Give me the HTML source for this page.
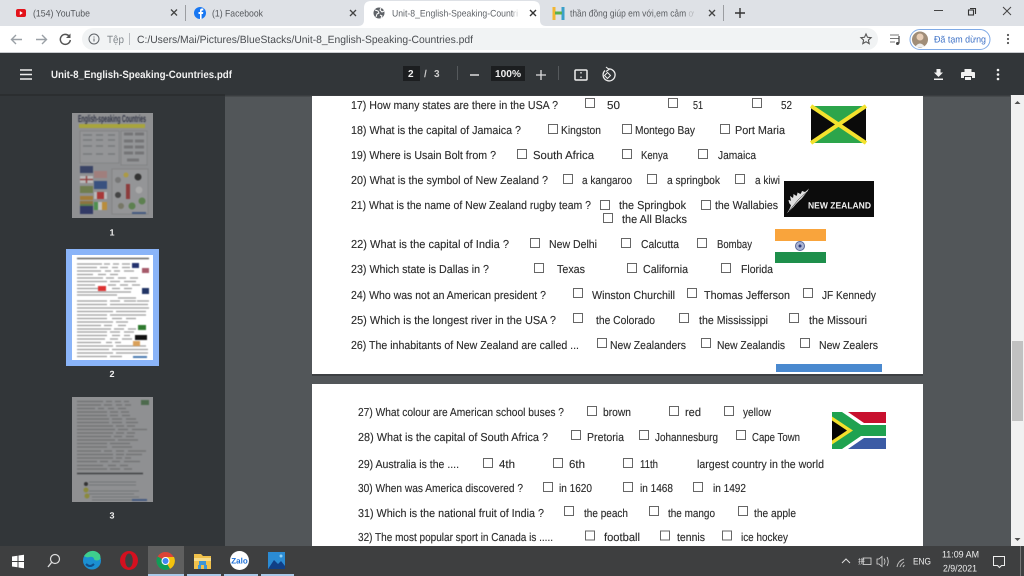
<!DOCTYPE html>
<html><head><meta charset="utf-8"><style>
html,body{margin:0;padding:0;width:1024px;height:576px;overflow:hidden;background:#525659}
svg{display:block;text-rendering:geometricPrecision}
.q text{font-family:"Liberation Sans",sans-serif;font-size:11.5px;fill:#2a2a2a;stroke:#2a2a2a;stroke-width:.12px}
.q{filter:blur(.3px)}
.c rect{fill:#fff;stroke:#666;stroke-width:1}
.u{font-family:"Liberation Sans",sans-serif}
.t{filter:blur(.55px)}
.s{filter:blur(.3px)}
</style></head><body>
<svg width="1024" height="576" viewBox="0 0 1024 576" xmlns="http://www.w3.org/2000/svg">
<!-- base -->
<rect width="1024" height="576" fill="#525659"/>
<!-- tab strip -->
<rect width="1024" height="26" fill="#dee1e6"/>
<path d="M358 26q6 0 6-6V8q0-7 7-7h162q7 0 7 7v12q0 6 6 6z" fill="#fff"/>
<rect y="26" width="1024" height="27" fill="#fff"/>
<rect x="82" y="28" width="796" height="22" rx="11" fill="#f1f3f4"/>
<rect y="52" width="1024" height="1" fill="#c9cbcf"/>
<g class="s">
<!-- tab 1 -->
<rect x="16" y="9" width="10" height="8" rx="2" fill="#e3131b"/><path d="M19.800 11l3 2-3 2z" fill="#fff"/>
<text class="u" x="33" y="16.500" font-size="9.500" fill="#55585c" textLength="57" lengthAdjust="spacingAndGlyphs">(154) YouTube</text>
<path d="M171 9.500l6 6M177 9.500l-6 6" stroke="#444" stroke-width="1.300"/>
<rect x="185" y="5" width="1" height="16" fill="#9b9da1"/>
<circle cx="200" cy="13" r="6" fill="#1877f2"/><path d="M200 19v-5h-1.500v-2h1.500v-1.500q0-2 2-2h1.300v2h-1q-.7 0-.7.7V12h1.700l-.3 2h-1.400v5z" fill="#fff"/>
<text class="u" x="212" y="16.500" font-size="9.500" fill="#55585c" textLength="51" lengthAdjust="spacingAndGlyphs">(1) Facebook</text>
<path d="M350 10l6 6M356 10l-6 6" stroke="#444" stroke-width="1.300"/>
<!-- tab 3 -->
<circle cx="379" cy="13" r="5.500" fill="#5f6368"/><path d="M375 10l3 1 1 2-2 1-1 3M381 8l-1 2 2 2 2-1M380 15l2 1-1 2" stroke="#fff" stroke-width="1" fill="none"/>
<text class="u" x="392" y="16.500" font-size="9.500" fill="#5f6368" textLength="126" lengthAdjust="spacingAndGlyphs">Unit-8_English-Speaking-Countri</text>
<rect x="514" y="5" width="12" height="16" fill="#fff" opacity=".7"/>
<path d="M530 10l6 6M536 10l-6 6" stroke="#333" stroke-width="1.400"/>
<!-- tab 4 -->
<path d="M554 7v13" stroke="#f2b632" stroke-width="3"/><path d="M563 7v13" stroke="#3aa0c9" stroke-width="3"/><path d="M555 13h7" stroke="#5bb04a" stroke-width="3"/>
<text class="u" x="570" y="16.500" font-size="9.500" fill="#5a5d61" textLength="124" lengthAdjust="spacingAndGlyphs">thần đồng giúp em với,em cảm ơ</text>
<rect x="688" y="5" width="8" height="16" fill="#dee1e6" opacity=".7"/>
<path d="M709 10l6 6M715 10l-6 6" stroke="#444" stroke-width="1.300"/>
<rect x="723" y="5" width="1" height="16" fill="#9b9da1"/>
<path d="M740 8v10M735 13h10" stroke="#333" stroke-width="1.400"/>
<!-- window controls -->
<path d="M934 10.500h9" stroke="#444" stroke-width="1"/>
<path d="M970 8.500h5.500v5.500" stroke="#333" stroke-width="1.100" fill="none"/><rect x="968.500" y="10" width="5" height="5" stroke="#333" stroke-width="1.100" fill="none"/>
<path d="M1003 7l8 8M1011 7l-8 8" stroke="#444" stroke-width="1"/>
<!-- nav -->
<path d="M12 39.500h10M16 35l-4.500 4.500L16 44" stroke="#9aa0a6" stroke-width="1.400" fill="none"/>
<path d="M36 39.500h10M42 35l4.500 4.500L42 44" stroke="#9aa0a6" stroke-width="1.400" fill="none"/>
<path d="M69 36a5 5 0 1 0 1.300 4" stroke="#555" stroke-width="1.500" fill="none"/><path d="M70.500 33.500v4.500h-4.500z" fill="#555"/>
<circle cx="94" cy="39" r="5" fill="none" stroke="#5f6368" stroke-width="1"/><path d="M94 38.500v3M94 36.500v1" stroke="#5f6368" stroke-width="1"/>
<text class="u" x="107" y="43" font-size="10.500" fill="#80868b" textLength="17" lengthAdjust="spacingAndGlyphs">Tệp</text>
<rect x="129" y="33" width="1" height="12" fill="#b9bcc0"/>
<text class="u" x="137" y="43" font-size="10.500" fill="#4a4d51" textLength="336" lengthAdjust="spacingAndGlyphs">C:/Users/Mai/Pictures/BlueStacks/Unit-8_English-Speaking-Countries.pdf</text>
<path d="M866 34l1.500 3.300 3.600.4-2.700 2.400.8 3.500-3.200-1.800-3.200 1.800.8-3.500-2.700-2.400 3.600-.4z" fill="none" stroke="#555" stroke-width="1.100"/>
<path d="M890 35h9M890 38.500h9M890 42h5" stroke="#777" stroke-width="1"/><path d="M899 36v7.500" stroke="#444" stroke-width="1.200"/><circle cx="897.500" cy="43.500" r="1.500" fill="#444"/>
<rect x="910" y="29.500" width="80" height="20" rx="10" fill="#fff" stroke="#7faae6" stroke-width="1"/>
<circle cx="920" cy="39.500" r="8" fill="#a08d78"/><circle cx="920" cy="37" r="3.500" fill="#e7cdb6"/><path d="M915 47q5-7 10 0z" fill="#eee"/>
<text class="u" x="934" y="42.500" font-size="9.500" fill="#3d71c6" textLength="52" lengthAdjust="spacingAndGlyphs">Đã tạm dừng</text>
<circle cx="1008" cy="35" r="1.100" fill="#555"/><circle cx="1008" cy="39" r="1.100" fill="#555"/><circle cx="1008" cy="43" r="1.100" fill="#555"/>
</g>
<!-- pdf toolbar -->
<rect y="53" width="1024" height="42" fill="#323639"/>
<rect y="95" width="225" height="451" fill="#323639"/>
<g class="s">
<path d="M20 70h12M20 74.500h12M20 79h12" stroke="#eee" stroke-width="1.500"/>
<text class="u" x="51" y="78" font-size="10.500" font-weight="700" fill="#f1f1f1" textLength="181" lengthAdjust="spacingAndGlyphs">Unit-8_English-Speaking-Countries.pdf</text>
<rect x="403" y="66" width="17" height="15" fill="#1c1e20"/>
<text class="u" x="408" y="77" font-size="10" font-weight="700" fill="#eee">2</text>
<text class="u" x="424" y="77" font-size="10" font-weight="700" fill="#ccc">/</text>
<text class="u" x="434" y="77" font-size="10" font-weight="700" fill="#ccc">3</text>
<rect x="457" y="66" width="1" height="14" fill="#55595c"/>
<path d="M470 75h9" stroke="#ddd" stroke-width="1.500"/>
<rect x="491" y="66" width="34" height="15" fill="#1c1e20"/>
<text class="u" x="495" y="77" font-size="10" font-weight="700" fill="#eee" textLength="26" lengthAdjust="spacingAndGlyphs">100%</text>
<path d="M536 75h10M541 70v10" stroke="#ddd" stroke-width="1.300"/>
<rect x="558" y="66" width="1" height="14" fill="#55595c"/>
<rect x="575" y="70" width="12" height="10" rx="1" fill="none" stroke="#eee" stroke-width="1.500"/><path d="M581 72v1.500M581 76.500v1.500" stroke="#eee" stroke-width="1.300"/>
<path d="M608 69a6 6 0 1 1-3 1.500" fill="none" stroke="#eee" stroke-width="1.300"/><path d="M606 67l3 2.500-3 2" fill="none" stroke="#eee" stroke-width="1.100"/><path d="M607.500 72.500l3 3-3 3-3-3z" fill="none" stroke="#eee" stroke-width="1"/>
<path d="M936.500 69h4v3.500h2.500l-4.500 4.500-4.500-4.500h2.500z" fill="#f1f1f1"/><rect x="934" y="78.500" width="9" height="1.500" fill="#f1f1f1"/>
<path d="M964.500 69h7v3h-7z" fill="#f1f1f1"/><path d="M962 72h12q1 0 1 1v5h-3v-2h-8v2h-3v-5q0-1 1-1z" fill="#f1f1f1"/><rect x="965" y="77" width="6" height="3" fill="#f1f1f1"/>
<circle cx="998" cy="70" r="1.300" fill="#f1f1f1"/><circle cx="998" cy="74.500" r="1.300" fill="#f1f1f1"/><circle cx="998" cy="79" r="1.300" fill="#f1f1f1"/>
</g>
<rect y="94" width="225" height="2" fill="#2b2e30"/>
<rect x="225" y="95" width="785" height="1.500" fill="#3a3d40"/>
<!-- sidebar thumbnails -->
<rect x="72" y="113" width="81" height="105" fill="#8f9092"/>
<g class="t">
<text x="78" y="122" font-size="10" font-weight="700" font-family="Liberation Sans,sans-serif" fill="#2d3142" textLength="68" lengthAdjust="spacingAndGlyphs">English-speaking Countries</text>
<rect x="79" y="124" width="66" height="4" fill="#a8a53c"/>
<rect x="80" y="131" width="39" height="32" fill="#949597" stroke="#767779" stroke-width=".5"/>
<rect x="121" y="131" width="26" height="34" fill="#949597" stroke="#767779" stroke-width=".5"/>
<path d="M83 135h9M96 135h7M108 135h7M83 140h9M96 140h7M108 140h7M83 146h9M96 146h7M108 146h7M83 154h9M96 154h7M108 154h7" stroke="#78797b" stroke-width="1.600"/>
<path d="M124 134h9M135 134h9M124 141h9M135 141h9M124 147h9M135 147h9M124 153h9M135 153h9M127 160h12" stroke="#747577" stroke-width="3"/>
<rect x="80" y="166" width="13" height="7" fill="#3a4466"/><rect x="94" y="171" width="13" height="7" fill="#a07f7d"/><rect x="80" y="176" width="13" height="7" fill="#b9b9b9"/><path d="M86.500 176v7M80 179.500h13" stroke="#8f3b3b" stroke-width="1.300"/><rect x="94" y="181" width="13" height="8" fill="#39517f"/><rect x="80" y="186" width="13" height="7" fill="#6f7d4f"/><rect x="94" y="192" width="13" height="7" fill="#b9b9b9"/><rect x="97" y="192" width="7" height="7" fill="#a83838"/><rect x="80" y="196" width="13" height="4" fill="#a17c3a"/><rect x="80" y="201" width="13" height="3" fill="#8d7440"/><rect x="80" y="204" width="13" height="3" fill="#5d7d4f"/><rect x="94" y="202" width="4" height="8" fill="#4f8f4f"/><rect x="98" y="202" width="4" height="8" fill="#c2c2c2"/><rect x="102" y="202" width="5" height="8" fill="#b98d3c"/><rect x="80" y="206" width="13" height="8" fill="#323a66"/>
<rect x="112" y="169" width="36" height="45" fill="#949597" stroke="#767779" stroke-width=".5"/>
<circle cx="118" cy="180" r="3" fill="#777"/><circle cx="126" cy="175" r="2.500" fill="#ac9a45"/><circle cx="138" cy="177" r="3.500" fill="#333"/><rect x="126" y="184" width="4" height="15" fill="#8c3c3c"/><circle cx="118" cy="195" r="3" fill="#444"/><circle cx="139" cy="190" r="3.500" fill="#aaa"/><circle cx="121" cy="206" r="3" fill="#776"/><circle cx="132" cy="206" r="3.500" fill="#5d8050"/><circle cx="142" cy="201" r="3.500" fill="#5d8050"/><rect x="132" y="212" width="14" height="2" fill="#445a80"/>
</g>
<text x="112" y="235.500" font-size="9" font-family="Liberation Sans,sans-serif" font-weight="700" text-anchor="middle" fill="#eee">1</text>

<rect x="66" y="249" width="93" height="117" fill="#8ab4f8"/>
<rect x="72" y="255" width="81" height="105" fill="#fff"/>
<g class="t">
<path d="M77 258.500h72" stroke="#666" stroke-width="1.600"/>
<path d="M77 264h25M104 264h6M113 264h6M122 264h8M77 267.500h20M100 267.500h8M112 267.500h6M122 267.500h8M77 271h24M105 271h6M114 271h6M124 271h10M77 274.500h16M98 274.500h8M110 274.500h8M77 278h26M106 278h8M118 278h8M130 278h8M77 281.500h30M110 281.500h10M124 281.500h12M77 285h18M108 285h8M120 285h8M132 285h8M77 288.500h22M112 288.500h8M124 288.500h8M77 292h54M77 295h40M118 298h18M77 301h30M110 301h10M124 301h12M137 301h12M77 304.500h30M110 304.500h38M77 308h72M77 311.500h36M116 311.500h30M77 315h30M110 315h36M77 318.500h30M112 318.500h10M126 318.500h10M77 322h36M116 322h12M77 325.500h24M104 325.500h8M118 325.500h8M77 329h34M114 329h10M128 329h8M77 332h30M110 332h10M124 332h10M77 335.500h30M112 335.500h8M124 335.500h6M77 339h28M110 339h8M122 339h10M77 342.500h24M106 342.500h6M115 342.500h6M77 346h36M116 346h30M77 349.500h32M112 349.500h36M77 353h36M116 353h32M77 356.500h30M110 356.500h12" stroke="#9c9c9c" stroke-width="1.300"/>
<rect x="132" y="263" width="7" height="5" fill="#23316e"/><rect x="142" y="268" width="7" height="5" fill="#a65a6a"/><rect x="98" y="286" width="8" height="5" fill="#d33"/><rect x="142" y="288" width="7" height="6" fill="#223566"/>
<rect x="138" y="325" width="8" height="5" fill="#2f7a2f"/><rect x="135" y="335" width="12" height="5" fill="#111"/><rect x="133" y="341" width="7" height="5" fill="#d9a05a"/><rect x="133" y="356" width="14" height="2" fill="#4a7ab0"/>
</g>
<text x="112" y="377" font-size="9" font-family="Liberation Sans,sans-serif" font-weight="700" text-anchor="middle" fill="#eee">2</text>

<rect x="72" y="397" width="81" height="105" fill="#8f9092"/>
<g class="t">
<path d="M77 401.500h26M106 401.500h6M115 401.500h6M124 401.500h5M77 405h24M104 405h8M116 405h6M125 405h6M77 408.500h18M98 408.500h6M108 408.500h6M118 408.500h8M77 412h30M110 412h8M121 412h8M77 415.500h30M110 415.500h8M122 415.500h8M77 419h32M112 419h10M126 419h10M77 422.500h32M112 422.500h10M126 422.500h12M77 426h36M116 426h8M127 426h8M77 429.500h38M118 429.500h10M132 429.500h15M77 433h36M116 433h8M127 433h8M77 436.500h34M114 436.500h8M126 436.500h8M77 440h38M118 440h20M77 443.500h30M110 443.500h20M77 447h30M112 447h20M77 451h24M104 451h8M116 451h8M128 451h18M77 454.500h36M116 454.500h8M126 454.500h16M77 458h36M116 458h6M125 458h6M77 461.500h20M100 461.500h8M112 461.500h8M124 461.500h16M77 465.500h26M108 465.500h8M120 465.500h8M77 469h30M110 469h10M124 469h8" stroke="#6f7072" stroke-width="1.300"/>
<rect x="141" y="400" width="8" height="5" fill="#4d6a4d"/>
<path d="M77 473.500h66" stroke="#3f4042" stroke-width="1.500"/>
<path d="M89 482h47M89 485h47M89 491h50M89 494h45M92 497h47M92 500h40" stroke="#747577" stroke-width="1.100"/>
<circle cx="86" cy="484" r="2" fill="#333"/><circle cx="86" cy="490" r="2.500" fill="#8b8a3c"/><circle cx="87" cy="496" r="2.500" fill="#8b8a3c"/>
<rect x="132" y="499" width="15" height="2" fill="#445a80"/>
</g>
<text x="112" y="518.500" font-size="9" font-family="Liberation Sans,sans-serif" font-weight="700" text-anchor="middle" fill="#eee">3</text>
<!-- pages -->
<rect x="312" y="96" width="611" height="278" fill="#fff"/>
<rect x="312" y="374" width="611" height="2" fill="#3d4043"/>
<rect x="312" y="384" width="611" height="162" fill="#fff"/>
<rect x="776" y="364" width="106" height="8" fill="#4a89cf"/>
<!-- flags -->
<g class="s">
<rect x="811" y="106" width="55" height="37" fill="#2ca54b"/>
<path d="M811 106v37l26-18.500zM866 106v37l-26-18.500z" fill="#0a0a0a"/>
<path d="M811 106l55 37M866 106l-55 37" stroke="#f4e22d" stroke-width="4"/>
<rect x="784" y="181" width="90" height="36" fill="#0c0c0c"/>
<!-- silver fern -->
<path d="M787 213q3-4 4-8-2-1-2.500-5 1.500 0 2.500 1-.5-2.500-1-5l3 2q.5-2 .5-4l3 2q1-2 1-3.500l3 1.500q1-1.500 1.500-3l3 1q2-1.500 4-3.500-2 4-4 6l-2 2.500q-1.500 2-3.500 3.500l-2.500 2.500q-2 2-3.500 4-3 3-7 6.500z" fill="#e0e0e0"/>
<path d="M789 211q5-6 9-11 5-5 9-8" stroke="#0c0c0c" stroke-width=".5" fill="none"/>
<text class="u" x="808" y="208.500" font-size="9" font-weight="700" fill="#f4f4f4" textLength="63" lengthAdjust="spacingAndGlyphs">NEW ZEALAND</text>
<rect x="775" y="229" width="51" height="12" fill="#f9a43c"/>
<rect x="775" y="241" width="51" height="11" fill="#fff"/>
<rect x="775" y="252" width="51" height="11" fill="#1e8f4b"/>
<circle cx="800" cy="246" r="4.500" fill="#aab4d4" stroke="#5a6a9a"/><circle cx="800" cy="246" r="1.500" fill="#2d3a7a"/>
<rect x="832" y="412" width="54" height="37" fill="#fff"/>
<path d="M848 412h38v11h-22z" fill="#c8102e"/>
<path d="M864 438h22v11h-38z" fill="#3b5ba5"/>
<path d="M832 412h10l19 13h25v11h-25l-19 13h-10z" fill="#1fa250"/>
<path d="M832 416.500l21 14-21 14z" fill="#f2e02c"/>
<path d="M832 420.500l15 10-15 10z" fill="#050505"/>
</g>
<!-- questions page 1 -->
<g class="q">
<text x="351" y="109" textLength="207" lengthAdjust="spacingAndGlyphs">17) How many states are there in the USA ?</text>
<text x="607" y="109" textLength="13" lengthAdjust="spacingAndGlyphs">50</text>
<text x="693" y="109" textLength="10" lengthAdjust="spacingAndGlyphs">51</text>
<text x="781" y="109" textLength="11" lengthAdjust="spacingAndGlyphs">52</text>
<text x="351" y="134" textLength="170" lengthAdjust="spacingAndGlyphs">18) What is the capital of Jamaica ?</text>
<text x="561" y="134" textLength="40" lengthAdjust="spacingAndGlyphs">Kingston</text>
<text x="635" y="134" textLength="60" lengthAdjust="spacingAndGlyphs">Montego Bay</text>
<text x="735" y="134" textLength="50" lengthAdjust="spacingAndGlyphs">Port Maria</text>
<text x="351" y="159" textLength="145" lengthAdjust="spacingAndGlyphs">19) Where is Usain Bolt from ?</text>
<text x="533" y="159" textLength="61" lengthAdjust="spacingAndGlyphs">South Africa</text>
<text x="641" y="159" textLength="27" lengthAdjust="spacingAndGlyphs">Kenya</text>
<text x="718" y="159" textLength="38" lengthAdjust="spacingAndGlyphs">Jamaica</text>
<text x="351" y="184" textLength="197" lengthAdjust="spacingAndGlyphs">20) What is the symbol of New Zealand  ?</text>
<text x="582" y="184" textLength="50" lengthAdjust="spacingAndGlyphs">a kangaroo</text>
<text x="667" y="184" textLength="53" lengthAdjust="spacingAndGlyphs">a springbok</text>
<text x="755" y="184" textLength="25" lengthAdjust="spacingAndGlyphs">a kiwi</text>
<text x="351" y="209" textLength="240" lengthAdjust="spacingAndGlyphs">21) What is the name of New Zealand rugby team ?</text>
<text x="619" y="209" textLength="67" lengthAdjust="spacingAndGlyphs">the Springbok</text>
<text x="715" y="209" textLength="63" lengthAdjust="spacingAndGlyphs">the Wallabies</text>
<text x="622" y="223" textLength="65" lengthAdjust="spacingAndGlyphs">the All Blacks</text>
<text x="351" y="248" textLength="158" lengthAdjust="spacingAndGlyphs">22) What is the capital of India ?</text>
<text x="549" y="248" textLength="48" lengthAdjust="spacingAndGlyphs">New Delhi</text>
<text x="641" y="248" textLength="38" lengthAdjust="spacingAndGlyphs">Calcutta</text>
<text x="717" y="248" textLength="35" lengthAdjust="spacingAndGlyphs">Bombay</text>
<text x="351" y="273" textLength="138" lengthAdjust="spacingAndGlyphs">23) Which state is Dallas in ?</text>
<text x="557" y="273" textLength="28" lengthAdjust="spacingAndGlyphs">Texas</text>
<text x="643" y="273" textLength="45" lengthAdjust="spacingAndGlyphs">California</text>
<text x="741" y="273" textLength="32" lengthAdjust="spacingAndGlyphs">Florida</text>
<text x="351" y="299" textLength="195" lengthAdjust="spacingAndGlyphs">24) Who was not an American president ?</text>
<text x="592" y="299" textLength="83" lengthAdjust="spacingAndGlyphs">Winston Churchill</text>
<text x="704" y="299" textLength="86" lengthAdjust="spacingAndGlyphs">Thomas Jefferson</text>
<text x="822" y="299" textLength="54" lengthAdjust="spacingAndGlyphs">JF Kennedy</text>
<text x="351" y="324" textLength="205" lengthAdjust="spacingAndGlyphs">25) Which is the longest river in the USA ?</text>
<text x="596" y="324" textLength="59" lengthAdjust="spacingAndGlyphs">the Colorado</text>
<text x="699" y="324" textLength="69" lengthAdjust="spacingAndGlyphs">the Mississippi</text>
<text x="809" y="324" textLength="58" lengthAdjust="spacingAndGlyphs">the Missouri</text>
<text x="351" y="349" textLength="228" lengthAdjust="spacingAndGlyphs">26) The inhabitants of New Zealand are called ...</text>
<text x="610" y="349" textLength="76" lengthAdjust="spacingAndGlyphs">New Zealanders</text>
<text x="717" y="349" textLength="68" lengthAdjust="spacingAndGlyphs">New Zealandis</text>
<text x="819" y="349" textLength="59" lengthAdjust="spacingAndGlyphs">New Zealers</text>
<!-- page 2 -->
<text x="358" y="416" textLength="206" lengthAdjust="spacingAndGlyphs">27) What colour are American school buses ?</text>
<text x="603" y="416" textLength="28" lengthAdjust="spacingAndGlyphs">brown</text>
<text x="685" y="416" textLength="16" lengthAdjust="spacingAndGlyphs">red</text>
<text x="743" y="416" textLength="28" lengthAdjust="spacingAndGlyphs">yellow</text>
<text x="358" y="441" textLength="190" lengthAdjust="spacingAndGlyphs">28) What is the capital of South Africa ?</text>
<text x="587" y="441" textLength="37" lengthAdjust="spacingAndGlyphs">Pretoria</text>
<text x="655" y="441" textLength="63" lengthAdjust="spacingAndGlyphs">Johannesburg</text>
<text x="752" y="441" textLength="48" lengthAdjust="spacingAndGlyphs">Cape Town</text>
<text x="358" y="468" textLength="101" lengthAdjust="spacingAndGlyphs">29) Australia is the ....</text>
<text x="499" y="468" textLength="16" lengthAdjust="spacingAndGlyphs">4th</text>
<text x="569" y="468" textLength="16" lengthAdjust="spacingAndGlyphs">6th</text>
<text x="640" y="468" textLength="18" lengthAdjust="spacingAndGlyphs">11th</text>
<text x="697" y="468" textLength="127" lengthAdjust="spacingAndGlyphs">largest country in the world</text>
<text x="358" y="492" textLength="165" lengthAdjust="spacingAndGlyphs">30) When was America discovered ?</text>
<text x="559" y="492" textLength="33" lengthAdjust="spacingAndGlyphs">in 1620</text>
<text x="640" y="492" textLength="33" lengthAdjust="spacingAndGlyphs">in 1468</text>
<text x="713" y="492" textLength="33" lengthAdjust="spacingAndGlyphs">in 1492</text>
<text x="358" y="517" textLength="186" lengthAdjust="spacingAndGlyphs">31) Which is the national fruit of India ?</text>
<text x="584" y="517" textLength="44" lengthAdjust="spacingAndGlyphs">the peach</text>
<text x="668" y="517" textLength="47" lengthAdjust="spacingAndGlyphs">the mango</text>
<text x="754" y="517" textLength="42" lengthAdjust="spacingAndGlyphs">the apple</text>
<text x="358" y="541" textLength="195" lengthAdjust="spacingAndGlyphs">32) The most popular sport in Canada is .....</text>
<text x="604" y="541" textLength="36" lengthAdjust="spacingAndGlyphs">football</text>
<text x="677" y="541" textLength="28" lengthAdjust="spacingAndGlyphs">tennis</text>
<text x="741" y="541" textLength="47" lengthAdjust="spacingAndGlyphs">ice hockey</text>
</g>
<!-- checkboxes -->
<g class="c">
<rect x="585.500" y="98.500" width="9" height="9"/><rect x="668.500" y="98.500" width="9" height="9"/><rect x="752.500" y="98.500" width="9" height="9"/>
<rect x="548.500" y="124.500" width="9" height="9"/><rect x="622.500" y="124.500" width="9" height="9"/><rect x="720.500" y="124.500" width="9" height="9"/>
<rect x="517.500" y="149.500" width="9" height="9"/><rect x="622.500" y="149.500" width="9" height="9"/><rect x="698.500" y="149.500" width="9" height="9"/>
<rect x="563.500" y="174.500" width="9" height="9"/><rect x="647.500" y="174.500" width="9" height="9"/><rect x="735.500" y="174.500" width="9" height="9"/>
<rect x="600.500" y="200.500" width="9" height="9"/><rect x="701.500" y="200.500" width="9" height="9"/><rect x="603.500" y="213.500" width="9" height="9"/>
<rect x="530.500" y="238.500" width="9" height="9"/><rect x="621.500" y="238.500" width="9" height="9"/><rect x="697.500" y="238.500" width="9" height="9"/>
<rect x="534.500" y="263.500" width="9" height="9"/><rect x="627.500" y="263.500" width="9" height="9"/><rect x="721.500" y="263.500" width="9" height="9"/>
<rect x="573.500" y="288.500" width="9" height="9"/><rect x="687.500" y="288.500" width="9" height="9"/><rect x="803.500" y="288.500" width="9" height="9"/>
<rect x="573.500" y="313.500" width="9" height="9"/><rect x="679.500" y="313.500" width="9" height="9"/><rect x="789.500" y="313.500" width="9" height="9"/>
<rect x="597.500" y="338.500" width="9" height="9"/><rect x="701.500" y="338.500" width="9" height="9"/><rect x="800.500" y="338.500" width="9" height="9"/>
<rect x="587.500" y="406.500" width="9" height="9"/><rect x="669.500" y="406.500" width="9" height="9"/><rect x="724.500" y="406.500" width="9" height="9"/>
<rect x="571.500" y="430.500" width="9" height="9"/><rect x="639.500" y="430.500" width="9" height="9"/><rect x="736.500" y="430.500" width="9" height="9"/>
<rect x="483.500" y="458.500" width="9" height="9"/><rect x="553.500" y="458.500" width="9" height="9"/><rect x="623.500" y="458.500" width="9" height="9"/>
<rect x="543.500" y="482.500" width="9" height="9"/><rect x="623.500" y="482.500" width="9" height="9"/><rect x="693.500" y="482.500" width="9" height="9"/>
<rect x="564.500" y="506.500" width="9" height="9"/><rect x="649.500" y="506.500" width="9" height="9"/><rect x="738.500" y="506.500" width="9" height="9"/>
<rect x="585.500" y="531" width="9" height="9"/><rect x="660.500" y="531" width="9" height="9"/><rect x="722.500" y="531" width="9" height="9"/>
</g>
<!-- scrollbar -->
<rect x="1011" y="95" width="13" height="451" fill="#f1f1f1"/>
<rect x="1012" y="341" width="11" height="80" fill="#c1c1c1"/>
<path d="M1014.500 104l3-3 3 3z" fill="#505050"/><path d="M1014.500 538l3 3 3-3z" fill="#505050"/>
<!-- taskbar -->
<rect y="546" width="1024" height="30" fill="#3e3f40"/>
<rect x="148" y="546" width="36" height="30" fill="#5f5f5f"/>
<rect x="148" y="574" width="36" height="2" fill="#a9c9e8"/>
<rect x="187" y="574" width="34" height="2" fill="#a9c9e8"/>
<rect x="224" y="574" width="34" height="2" fill="#a9c9e8"/>
<rect x="261" y="574" width="33" height="2" fill="#a9c9e8"/>
<g class="s">
<!-- start -->
<path d="M12 556.500l5.500-.8v5.300H12zM18.500 555.500l5.500-.8v6.300h-5.500zM12 562h5.500v5.300l-5.500-.8zM18.500 562H24v6.300l-5.500-.8z" fill="#fff"/>
<circle cx="55" cy="559" r="4.500" fill="none" stroke="#ddd" stroke-width="1.200"/><path d="M51.500 562.500L48 567" stroke="#ddd" stroke-width="1.400"/>
<!-- edge -->
<circle cx="92" cy="560.500" r="9" fill="#1b8fd2"/><path d="M84 556q5-7 12-4.500 5 2 4.500 7-2 3-6 1.500-1-4-5-3-3 1-5.500-1z" fill="#3ecf8e"/><path d="M86 564q4 4 8 0" stroke="#104e8b" stroke-width="2" fill="none"/>
<!-- opera -->
<ellipse cx="129" cy="560.500" rx="9" ry="9.500" fill="#d4101f"/><ellipse cx="129" cy="560.500" rx="3.800" ry="7" fill="#3e3f40"/>
<!-- chrome -->
<circle cx="165.500" cy="561" r="9" fill="#db4437"/>
<path d="M165.500 561l-7.800 4.500A9 9 0 0 1 157.700 556.500z" fill="#0f9d58"/><path d="M157.700 565.500A9 9 0 0 0 170 568.800L165.500 561z" fill="#0f9d58"/><path d="M165.500 561l4.500 7.800A9 9 0 0 0 174 557h-8.500z" fill="#f4c20d"/>
<circle cx="165.500" cy="561" r="4" fill="#fff"/><circle cx="165.500" cy="561" r="3" fill="#4285f4"/>
<!-- folder -->
<path d="M194 554h7l2 2h8v13h-17z" fill="#f0c14b"/><rect x="194" y="558" width="17" height="3" fill="#f7dc8a"/><rect x="199" y="561" width="7" height="4" fill="#3d95d6"/><rect x="198" y="565" width="3" height="4" fill="#3d95d6"/><rect x="204" y="565" width="3" height="4" fill="#3d95d6"/>
<!-- zalo -->
<circle cx="239.500" cy="560.500" r="9.500" fill="#fff"/>
<text class="u" x="239.500" y="563.500" font-size="8" font-weight="700" fill="#1b6fd8" text-anchor="middle">Zalo</text>
<!-- photos -->
<rect x="268" y="552" width="17" height="17" fill="#2b8bd3"/><path d="M268 569l6-9 4 4 3-3 4 5v3z" fill="#103f86"/><circle cx="281" cy="556" r="1.500" fill="#8fd0f5"/>
<!-- tray -->
<path d="M842 563l4-4 4 4" stroke="#ddd" stroke-width="1" fill="none"/>
<text x="858" y="564" font-size="7" fill="#ddd" font-family="Noto Sans CJK SC,sans-serif">拼</text>
<rect x="863" y="558" width="8" height="6.500" fill="none" stroke="#ddd" stroke-width=".8"/>
<path d="M877 559h2l3-2.500v10l-3-2.500h-2zM884 558.500q2 3 0 6M887 557q2.500 4.500 0 9" stroke="#ddd" stroke-width=".8" fill="none"/>
<path d="M897 567q1-6 7-8M900 567q1-3 4-5M903 567q.5-1 1.500-2" stroke="#bbb" stroke-width="1" fill="none"/>
<text class="u" x="913" y="564.500" font-size="9.500" fill="#eee" textLength="18" lengthAdjust="spacingAndGlyphs">ENG</text>
<text class="u" x="942" y="557.500" font-size="9.500" fill="#eee" textLength="37" lengthAdjust="spacingAndGlyphs">11:09 AM</text>
<text class="u" x="943" y="571.500" font-size="9.500" fill="#eee" textLength="34" lengthAdjust="spacingAndGlyphs">2/9/2021</text>
<path d="M993.500 556.500h11v9h-3l-2 2-2-2h-4z" fill="none" stroke="#eee" stroke-width="1"/>
<rect x="1020" y="546" width="1" height="30" fill="#777"/>
</g>
</svg>
</body></html>
